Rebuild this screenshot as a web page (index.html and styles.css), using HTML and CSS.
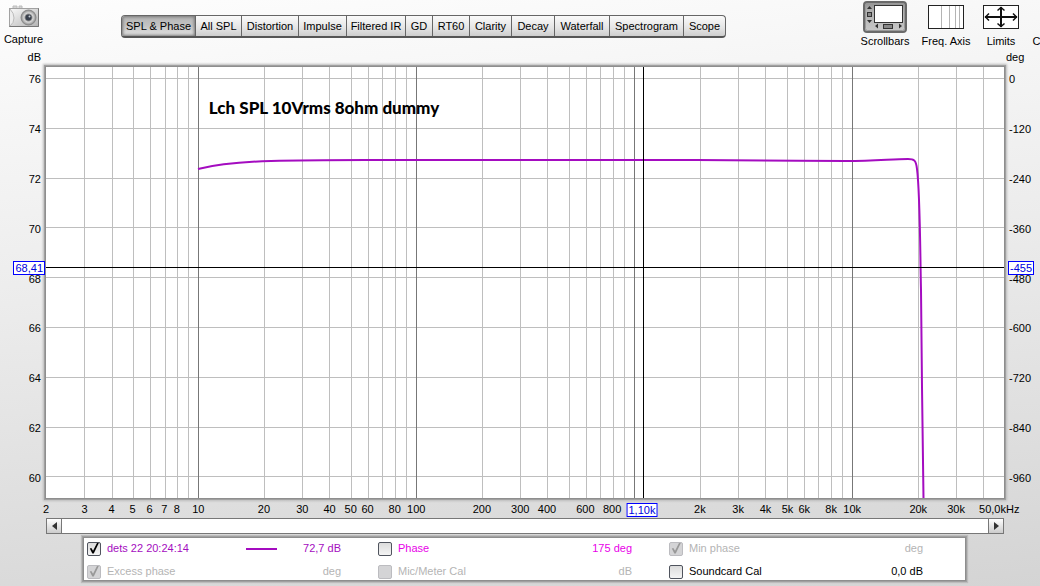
FILE: index.html
```html
<!DOCTYPE html>
<html lang="en">
<head>
<meta charset="utf-8">
<meta name="viewport" content="width=device-width, initial-scale=1">
<title>SPL &amp; Phase</title>
<link rel="stylesheet" href="styles.css">
</head>
<body>
<header class="toolbar">
  <button class="tool capture" type="button">
    <svg class="icon" width="32" height="24" viewBox="0 0 32 24" aria-hidden="true">
      <defs>
        <linearGradient id="cam" x1="0" y1="0" x2="1" y2="1"><stop offset="0" stop-color="#fafafa"/><stop offset="1" stop-color="#b4b4b4"/></linearGradient>
        <radialGradient id="lens"><stop offset="0" stop-color="#555"/><stop offset=".45" stop-color="#8d8d8d"/><stop offset=".6" stop-color="#d8d8d8"/><stop offset="1" stop-color="#8a8a8a"/></radialGradient>
      </defs>
      <path d="M5 3V1h4v2M11 3V1h3v2" fill="#d4d4d4" stroke="#bcbcbc"/>
      <rect x="1.500" y="3.500" width="29" height="18" fill="url(#cam)" stroke="#a2a2a2"/>
      <path d="M2 4q4 4 4 9t-4 8" fill="#eee" stroke="#bbb"/>
      <path d="M1.500 21.500h29v-18" fill="none" stroke="#777"/>
      <circle cx="20.500" cy="12.500" r="7.500" fill="url(#lens)" stroke="#888"/>
      <circle cx="20.500" cy="12.500" r="3" fill="#39404c"/>
      <circle cx="21.500" cy="11.500" r="1" fill="#c9ced6"/>
    </svg>
    <span>Capture</span>
  </button>
  <nav class="tabs" aria-label="Graphs">
    <button class="tab active" type="button">SPL &amp; Phase</button>
    <button class="tab" type="button">All SPL</button>
    <button class="tab" type="button">Distortion</button>
    <button class="tab" type="button">Impulse</button>
    <button class="tab" type="button">Filtered IR</button>
    <button class="tab" type="button">GD</button>
    <button class="tab" type="button">RT60</button>
    <button class="tab" type="button">Clarity</button>
    <button class="tab" type="button">Decay</button>
    <button class="tab" type="button">Waterfall</button>
    <button class="tab" type="button">Spectrogram</button>
    <button class="tab" type="button">Scope</button>
  </nav>
  <div class="tools">
    <button class="tool wide" type="button">
      <svg class="icon" width="44" height="32" viewBox="0 0 44 32" aria-hidden="true">
        <defs><linearGradient id="press" x1="0" y1="0" x2="0" y2="1"><stop offset="0" stop-color="#8e8e8e"/><stop offset=".3" stop-color="#b2b2b2"/><stop offset="1" stop-color="#c8c8c8"/></linearGradient></defs>
        <rect x="1" y="1" width="42" height="30" rx="3" fill="url(#press)" stroke="#6a6a6a" stroke-width="2"/>
        <rect x="2.500" y="2.500" width="39" height="27" rx="2" fill="none" stroke="#999"/>
        <rect x="11.500" y="4.500" width="28" height="17" fill="#fff" stroke="#333"/>
        <path d="M4 8l2.500-3L9 8zM4 19l2.500 3L9 19zM15 22.500L12 25l3 2.500zM36 22.500l3 2.500-3 2.500z" fill="#333"/>
        <rect x="4.500" y="11.500" width="4" height="4" fill="#888" stroke="#333"/>
        <rect x="20.500" y="23.500" width="9" height="4" fill="#888" stroke="#333"/>
      </svg>
      <span>Scrollbars</span>
    </button>
    <button class="tool wide" type="button">
      <svg class="icon" width="36" height="32" viewBox="0 0 36 32" aria-hidden="true">
        <rect x=".5" y="4.500" width="35" height="23" fill="#fff" stroke="#222"/>
        <path d="M13.500 5v22M21.500 5v22M27.500 5v22M31.500 5v22" stroke="#b4b4b4"/>
      </svg>
      <span>Freq. Axis</span>
    </button>
    <button class="tool" type="button">
      <svg class="icon" width="36" height="32" viewBox="0 0 36 32" aria-hidden="true">
        <rect x=".5" y="4.500" width="35" height="23" fill="#fff" stroke="#222"/>
        <path d="M2 16h32M18 6v20" stroke="#111" stroke-width="2"/>
        <path d="M6 12.500L2.500 16 6 19.500M30 12.500l3.500 3.500-3.500 3.500M14.500 9.500L18 6.500l3.500 3M14.500 22.500l3.500 3 3.500-3" fill="none" stroke="#111" stroke-width="1.500"/>
      </svg>
      <span>Limits</span>
    </button>
    <button class="tool last" type="button"><span>Controls</span></button>
  </div>
</header>

<main class="graph">
  <div class="unit">dB</div>
  <div class="unit deg">deg</div>
  <div class="axis left"><span>76</span><span>74</span><span>72</span><span>70</span><span>68</span><span>66</span><span>64</span><span>62</span><span>60</span></div>
  <div class="plot">
    <svg class="chart" viewBox="0 0 958 431" preserveAspectRatio="none" role="img" aria-label="SPL against frequency">
      <g class="grid">
        <path d="M38.500 0v431M66.500 0v431M87.500 0v431M104.500 0v431M119.500 0v431M131.500 0v431M142.500 0v431"/>
        <path d="M218.500 0v431M256.500 0v431M283.500 0v431M305.500 0v431M322.500 0v431M336.500 0v431M349.500 0v431M360.500 0v431"/>
        <path d="M436.500 0v431M474.500 0v431M501.500 0v431M523.500 0v431M540.500 0v431M554.500 0v431M567.500 0v431M578.500 0v431"/>
        <path d="M654.500 0v431M692.500 0v431M719.500 0v431M741.500 0v431M758.500 0v431M772.500 0v431M785.500 0v431M796.500 0v431"/>
        <path d="M872.500 0v431M910.500 0v431M937.500 0v431"/>
        <path d="M0 11.500h958M0 61.500h958M0 111.500h958M0 160.500h958M0 210.500h958M0 260.500h958M0 310.500h958M0 360.500h958M0 409.500h958"/>
      </g>
      <path class="decade" d="M152.500 0v431M370.500 0v431M588.500 0v431M806.500 0v431"/>
      <path class="trace" d="M152 102C168 98 188 95 225 94C270 92.500 310 93 370 93H650C710 93 750 94 800 94C830 94 846 92 862 92C868 92 870 93 871 102C874 125 874 175 875 223L876 320L877.500 431"/>
      <path class="cursor" d="M0 200.500h958M597.500 0v431"/>
    </svg>
    <h1 class="caption">Lch SPL 10Vrms 8ohm dummy</h1>
    <output class="readout spl">68,41</output>
    <output class="readout phase">-455</output>
    <output class="readout freq">1,10k</output>
  </div>
  <div class="axis right"><span>0</span><span>-120</span><span>-240</span><span>-360</span><span>-480</span><span>-600</span><span>-720</span><span>-840</span><span>-960</span></div>
  <div class="freqs">
    <span style="left:0%">2</span><span style="left:4.02%">3</span><span style="left:6.84%">4</span><span style="left:9.03%">5</span><span style="left:10.82%">6</span><span style="left:12.34%">7</span><span style="left:13.65%">8</span>
    <span style="left:15.9%">10</span><span style="left:22.75%">20</span><span style="left:26.75%">30</span><span style="left:29.6%">40</span><span style="left:31.8%">50</span><span style="left:33.56%">60</span><span style="left:36.4%">80</span>
    <span style="left:38.65%">100</span><span style="left:45.5%">200</span><span style="left:49.5%">300</span><span style="left:52.3%">400</span><span style="left:56.3%">600</span><span style="left:59.1%">800</span>
    <span style="left:68.25%">2k</span><span style="left:72.25%">3k</span><span style="left:75.1%">4k</span><span style="left:77.4%">5k</span><span style="left:79.15%">6k</span><span style="left:81.95%">8k</span>
    <span style="left:84.15%">10k</span><span style="left:91.05%">20k</span><span style="left:95%">30k</span><span style="left:99.5%">50,0kHz</span>
  </div>
  <div class="scrollbar">
    <button class="arrow" type="button" aria-label="Scroll left"><svg width="5" height="8" viewBox="0 0 5 8"><path d="M5 0v8L0 4z" fill="#333"/></svg></button>
    <button class="arrow" type="button" aria-label="Scroll right"><svg width="5" height="8" viewBox="0 0 5 8"><path d="M0 0v8l5-4z" fill="#333"/></svg></button>
  </div>
</main>

<section class="legend" aria-label="Traces">
  <div class="item spl-trace"><input type="checkbox" id="t1" checked><label for="t1">dets 22 20:24:14</label><i class="swatch"></i><span class="value">72,7 dB</span></div>
  <div class="item phase-trace"><input type="checkbox" id="t2"><label for="t2">Phase</label><span class="value">175 deg</span></div>
  <div class="item off"><input type="checkbox" id="t3" checked disabled><label for="t3">Min phase</label><span class="value">deg</span></div>
  <div class="item off"><input type="checkbox" id="t4" checked disabled><label for="t4">Excess phase</label><span class="value">deg</span></div>
  <div class="item off"><input type="checkbox" id="t5" disabled><label for="t5">Mic/Meter Cal</label><span class="value">dB</span></div>
  <div class="item"><input type="checkbox" id="t6"><label for="t6">Soundcard Cal</label><span class="value">0,0 dB</span></div>
</section>
</body>
</html>
```
FILE: styles.css
```css
* { box-sizing: border-box; }

body {
  margin: 0;
  min-height: 100vh;
  display: flex;
  flex-direction: column;
  overflow-x: hidden;
  background: linear-gradient(175deg, #fdfdfd 0%, #ececec 45%, #d4d4d4 100%);
  color: #000;
  font: 11px/13px "Liberation Sans", Arial, sans-serif;
}

button {
  margin: 0;
  padding: 0;
  border: 0;
  background: none;
  color: inherit;
  font: inherit;
  white-space: nowrap;
}

.toolbar {
  display: flex;
  height: 48px;
  overflow: hidden;
}

.tool {
  width: 38px;
  flex: none;
  display: flex;
  flex-direction: column;
  align-items: center;
  justify-content: flex-end;
  gap: 2px;
}

.tool.wide { width: 50px; }
.tool.last { width: 44px; }
.icon { display: block; flex: none; }

.capture {
  width: 47px;
  gap: 4px;
  padding-bottom: 2px;
}

.tabs {
  display: grid;
  grid-template-columns: 73px 46px 57px 48px 59px 27px 37px 42px 43px 55px 74px 42px;
  height: 23px;
  margin: 15px 0 0 74px;
  border: 1px solid #666;
  border-bottom: 2px solid #555;
  border-radius: 4px;
  overflow: hidden;
  background: linear-gradient(#fafafa, #e4e4e4 60%, #cecece);
}

.tab { border-left: 1px solid #666; }
.tab:first-child { border-left: 0; }

.tab.active {
  background: linear-gradient(#b4b4b4, #c4c4c4 50%, #e4e4e4);
  box-shadow: inset 0 0 3px 1px #777;
}

.tools {
  display: flex;
  gap: 11px;
  width: 180px;
  margin-left: auto;
  overflow: hidden;
}

.graph {
  flex: 1;
  display: grid;
  grid-template-columns: 46px 1fr 36px;
  grid-template-rows: 19px 1fr 20px 16px;
}

.unit {
  grid-column: 1;
  grid-row: 1;
  padding: 3px 5px 0 0;
  text-align: right;
}

.unit.deg {
  grid-column: 3;
  padding: 3px 0 0 2px;
  text-align: left;
}

.axis {
  display: flex;
  flex-direction: column;
  justify-content: space-between;
  grid-row: 2;
  padding: 6px 5px 13px;
}

.left { grid-column: 1; text-align: right; }
.right { grid-column: 3; }

.plot {
  grid-column: 2;
  grid-row: 2;
  position: relative;
  min-height: 300px;
  background: #fff;
  box-shadow: 0 0 0 1px #8e8e8e, 0 0 0 2px #a0a0a0, 0 0 2px 3px #bcbcbc;
}

.chart {
  position: absolute;
  width: 100%;
  height: 100%;
}

.chart path { fill: none; vector-effect: non-scaling-stroke; }
.grid path { stroke: #bebebe; shape-rendering: crispEdges; }
.chart .decade { stroke: #777; shape-rendering: crispEdges; }
.chart .cursor { stroke: #000; shape-rendering: crispEdges; }
.chart .trace { stroke: #a40cc0; stroke-width: 2px; }

.caption {
  position: absolute;
  left: 17%;
  top: 7%;
  margin: 0;
  font: 900 17px/22px Lato, Calibri, sans-serif;
  white-space: nowrap;
}

.readout {
  position: absolute;
  height: 14px;
  padding: 0 1px;
  border: 1px solid #00f;
  background: #fff;
  color: #00d;
  line-height: 12px;
}

.spl { right: 100%; top: 45%; margin-right: 1px; }
.phase { left: 100%; top: 45%; margin-left: 4px; }
.freq { left: 62%; top: 100%; margin: 5px 0 0 2px; transform: translateX(-50%); }

.freqs {
  grid-column: 2;
  grid-row: 3;
  position: relative;
}

.freqs span {
  position: absolute;
  top: 5px;
  transform: translateX(-50%);
}

.scrollbar {
  grid-column: 2;
  grid-row: 4;
  display: flex;
  justify-content: space-between;
  border: 1px solid #777;
  background: #fff;
}

.arrow {
  width: 15px;
  display: flex;
  align-items: center;
  justify-content: center;
  border-right: 1px solid #777;
  background: linear-gradient(#fff, #ccc);
}

.arrow:last-child { border-right: 0; border-left: 1px solid #777; }

.legend {
  display: grid;
  grid-template-columns: repeat(3, 1fr);
  row-gap: 8px;
  margin: 4px 75px 6px 84px;
  padding: 3px 5px 1px 3px;
  background: #fff;
  box-shadow: 0 0 0 1px #8e8e8e, 0 0 0 2px #a0a0a0, 0 0 1px 3px #bcbcbc;
}

.item {
  display: flex;
  align-items: center;
  height: 15px;
  padding-right: 37px;
}

.item label { margin-left: 6px; white-space: nowrap; }
.value { margin-left: auto; white-space: nowrap; }
.swatch { width: 31px; height: 2px; margin-left: 57px; background: #a40cc0; }
.spl-trace { color: #a40cc0; }
.phase-trace { color: #e800e8; }
.off { color: #b4b4b4; }

input {
  appearance: none;
  flex: none;
  width: 14px;
  height: 14px;
  margin: 0;
  border: 1px solid #50545e;
  border-radius: 2px;
  background: linear-gradient(#dcdcdc, #f4f4f4);
}

input:disabled { border-color: #bcbcc0; background: #d4d4d6; }

input:checked::before {
  content: "";
  display: block;
  width: 12px;
  height: 12px;
  background: #000;
  clip-path: polygon(15% 50%, 28% 45%, 42% 68%, 75% 4%, 90% 4%, 48% 92%, 36% 92%);
}

input:disabled:checked::before { background: #999; }
```
